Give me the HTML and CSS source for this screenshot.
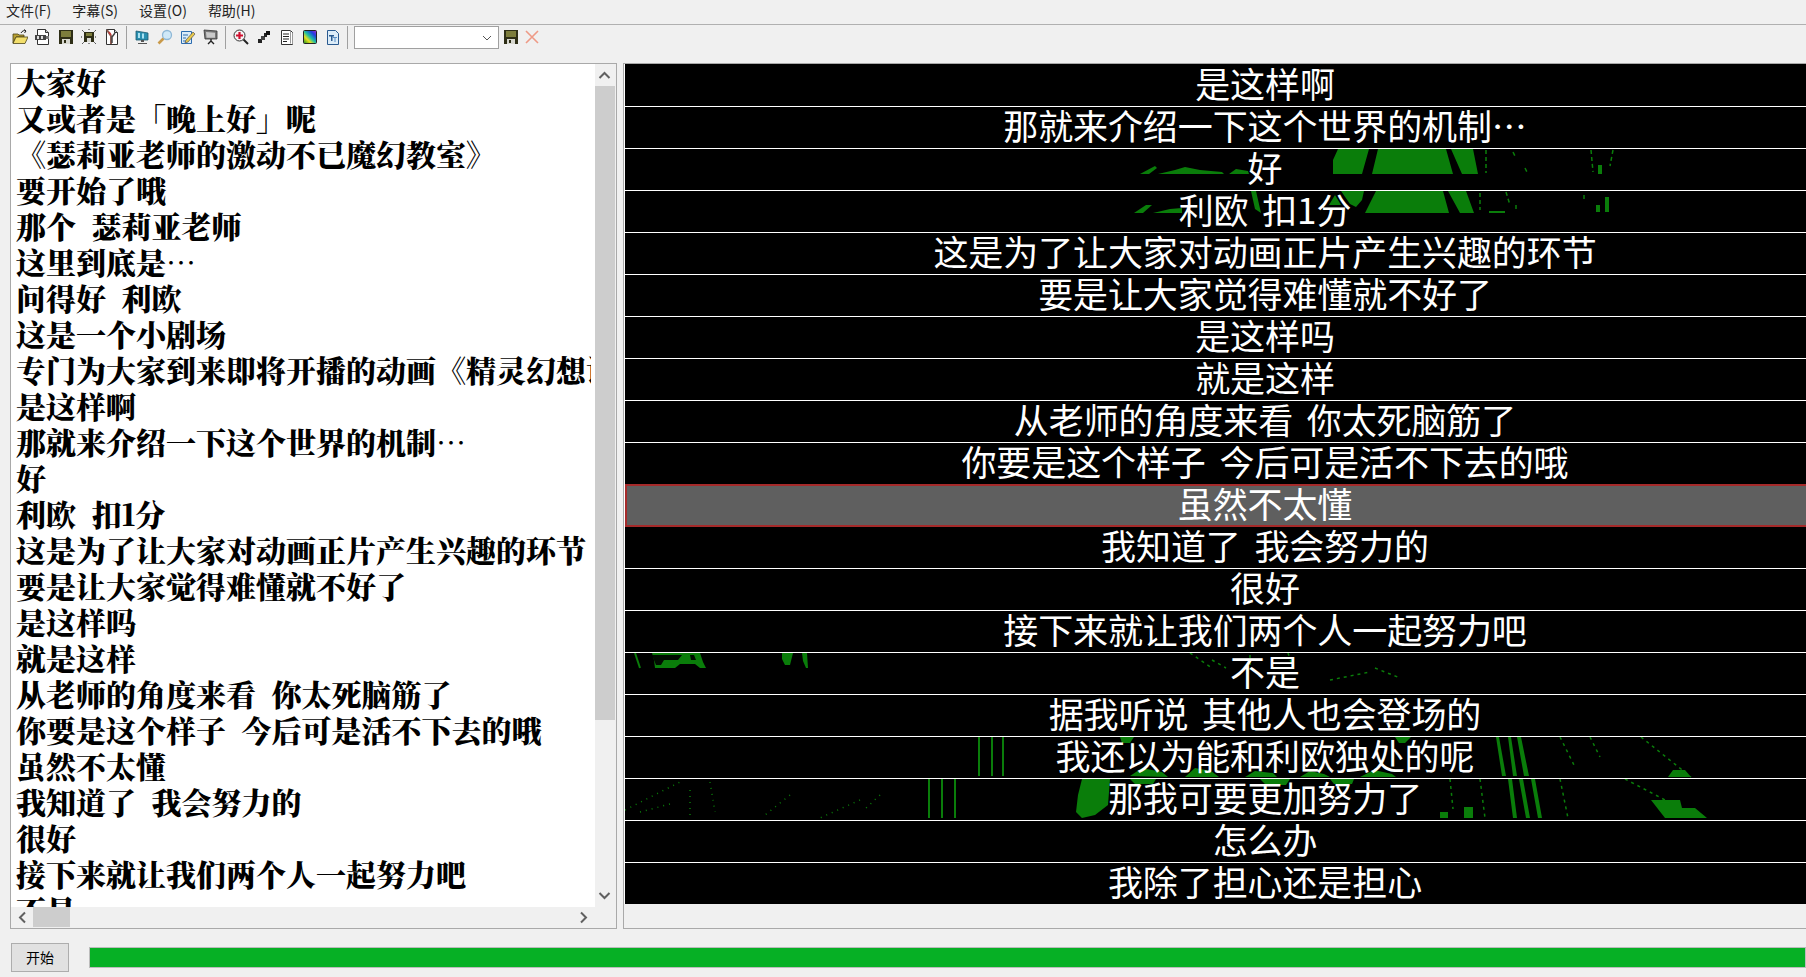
FILE: index.html
```html
<!DOCTYPE html>
<html lang="zh-CN">
<head>
	<meta charset="utf-8">
	<title>字幕</title>
	<link rel="stylesheet" href="styles.css">
</head>
<body>
	<svg class="defs" width="0" height="0">
		<symbol id="floppy" viewBox="0 0 16 16">
			<rect x="1" y="1" width="14" height="14" fill="#2e2e16"/>
			<rect x="3" y="2" width="10" height="6" fill="#7d7d3c"/>
			<rect x="4" y="10" width="8" height="5" fill="#d8d8d0"/>
			<rect x="6" y="11" width="2" height="3" fill="#2e2e16"/>
		</symbol>
		<symbol id="page" viewBox="0 0 16 16">
			<path d="M2.500.5h8l3 3v12h-11z" fill="#fff" stroke="#333"/>
			<path d="M10.500.5v3h3" fill="#ccc" stroke="#333"/>
		</symbol>
	</svg>

	<div class="menubar">
		<span>文件(F)</span>
		<span>字幕(S)</span>
		<span>设置(O)</span>
		<span>帮助(H)</span>
	</div>

	<div class="toolbar">
		<span class="tool"><svg viewBox="0 0 16 16"><path d="M1 5h5l1 1h5v2H4L1 14z" fill="#b8a032" stroke="#4a4218" stroke-width=".8"/><path d="M4 8h12l-3 6.500H1z" fill="#f3df6c" stroke="#4a4218" stroke-width=".8"/><path d="M9 4c1-2 3-3 5-2M14 2l-2-1.500M14 2l-1.500 2" fill="none" stroke="#222" stroke-width="1"/></svg></span>
		<span class="tool"><svg viewBox="0 0 16 16"><use href="#page"/><rect x="0" y="6" width="11" height="5" fill="#444"/><path d="M2 7h2v3H2zM6 7h2v3H6z" fill="#ddd"/><rect x="11" y="7" width="3" height="3" fill="#777"/></svg></span>
		<span class="tool"><svg viewBox="0 0 16 16"><use href="#floppy"/></svg></span>
		<span class="tool"><svg viewBox="0 0 16 16"><rect x="3" y="3" width="10" height="10" fill="#2e2e16"/><rect x="5" y="4" width="6" height="3" fill="#7d7d3c"/><rect x="6" y="9" width="4" height="4" fill="#d8d8d0"/><path d="M1 1l2 2M15 1l-2 2M1 15l2-2M15 15l-2-2M8 0v2M8 14v2M0 8h2M14 8h2" stroke="#222" stroke-width="1" stroke-dasharray="1 1"/></svg></span>
		<span class="tool"><svg viewBox="0 0 16 16"><use href="#page"/><path d="M3 1l4 6v8" fill="none" stroke="#8c5a50" stroke-width="2"/><path d="M11 4l-3 4v6" fill="none" stroke="#444" stroke-width="1.500"/><path d="M5 3l2 3" stroke="#c23a3a" stroke-width="1.500"/></svg></span>
		<i class="sep"></i>
		<span class="tool"><svg viewBox="0 0 16 16"><path d="M2 2l12 2v7L2 11z" fill="#2a8fb0" stroke="#1c5a70" stroke-width=".8"/><path d="M4 4h2v5H4zM8 4.500h2v5H8z" fill="#a9e2f2"/><path d="M7 11h3v2H7zM4 14h9v1H4z" fill="#555"/></svg></span>
		<span class="tool"><svg viewBox="0 0 16 16"><circle cx="10" cy="6" r="4.500" fill="#cfe8f7" stroke="#8fb8d6" stroke-width="1.300"/><path d="M6.500 9.500L1.500 14.500" stroke="#c99a4a" stroke-width="2.600"/></svg></span>
		<span class="tool"><svg viewBox="0 0 16 16"><path d="M1.500 2.500h10v12h-10z" fill="#dcecf8" stroke="#2c6cb0"/><path d="M3 6h5M3 9h3M3 12h4" stroke="#2c6cb0"/><path d="M6 11l7-8 2 2-7 8-3 1z" fill="#e8c84a" stroke="#555" stroke-width=".7"/></svg></span>
		<span class="tool"><svg viewBox="0 0 16 16"><path d="M1 1l13 1v8H2z" fill="#777" stroke="#333" stroke-width=".8"/><path d="M3 3l9 .7v5H3.500z" fill="#c9c9c9"/><path d="M8 10v3M8 12l-3 3M8 12l3 3" stroke="#222" stroke-width="1.400"/></svg></span>
		<i class="sep"></i>
		<span class="tool"><svg viewBox="0 0 16 16"><circle cx="6.500" cy="6.500" r="5.500" fill="#f4f4f4" stroke="#333" stroke-width="1"/><path d="M6.500 3v7M3 6.500h7" stroke="#d01030" stroke-width="2.200"/><path d="M10.500 10.500l4.500 4.500" stroke="#222" stroke-width="2"/></svg></span>
		<span class="tool"><svg viewBox="0 0 16 16"><path d="M2 10h4v4H2z" fill="#222"/><path d="M5 7h4v4H5z" fill="#444"/><path d="M8 4h3v4H8z" fill="#222"/><path d="M10 2h4v4h-4z" fill="#111"/></svg></span>
		<span class="tool"><svg viewBox="0 0 16 16"><path d="M2.500 1.500h9l2 2v12h-11z" fill="#fff" stroke="#333"/><path d="M11.500 1.500v13M13.500 4v11" stroke="#999"/><path d="M4 5h6M4 7.500h6M4 10h6M4 12.500h4" stroke="#222"/></svg></span>
		<span class="tool"><svg viewBox="0 0 16 16"><defs><linearGradient id="rainbow" x1="0" y1="1" x2="1" y2="0"><stop offset="0" stop-color="#0a8a20"/><stop offset=".3" stop-color="#e8e020"/><stop offset=".5" stop-color="#20c0a0"/><stop offset=".75" stop-color="#2040e0"/><stop offset="1" stop-color="#b020d0"/></linearGradient></defs><rect x="1.500" y="1.500" width="13" height="13" rx="1" fill="url(#rainbow)" stroke="#222"/></svg></span>
		<span class="tool"><svg viewBox="0 0 16 16"><path d="M2.500 1.500h8l3 3v11h-11z" fill="#dcecf8" stroke="#2a5a90"/><path d="M4 6h5v1.500H7.500V12H6V7.500H4z" fill="#2a5a90"/><path d="M8 8h4v1h-1.500v4h-1V9H8z" fill="#5a90c8"/></svg></span>
		<i class="sep"></i>
		<div class="combo">
			<svg viewBox="0 0 10 6"><path d="M1 1l4 4 4-4" fill="none" stroke="#555" stroke-width="1"/></svg>
		</div>
		<span class="tool"><svg viewBox="0 0 16 16"><use href="#floppy"/></svg></span>
		<span class="tool tool-close"><svg viewBox="0 0 16 16"><path d="M2 2l12 12M14 2L2 14" stroke="#ee9a86" stroke-width="1.600"/></svg></span>
	</div>

	<div class="main">
		<div class="text-panel">
			<div class="text-body">
				<div class="text-lines">
					<p>大家好</p>
					<p>又或者是「晚上好」呢</p>
					<p>《瑟莉亚老师的激动不已魔幻教室》</p>
					<p>要开始了哦</p>
					<p>那个 瑟莉亚老师</p>
					<p>这里到底是…</p>
					<p>问得好 利欧</p>
					<p>这是一个小剧场</p>
					<p>专门为大家到来即将开播的动画《精灵幻想记》</p>
					<p>是这样啊</p>
					<p>那就来介绍一下这个世界的机制…</p>
					<p>好</p>
					<p>利欧 扣1分</p>
					<p>这是为了让大家对动画正片产生兴趣的环节</p>
					<p>要是让大家觉得难懂就不好了</p>
					<p>是这样吗</p>
					<p>就是这样</p>
					<p>从老师的角度来看 你太死脑筋了</p>
					<p>你要是这个样子 今后可是活不下去的哦</p>
					<p>虽然不太懂</p>
					<p>我知道了 我会努力的</p>
					<p>很好</p>
					<p>接下来就让我们两个人一起努力吧</p>
					<p>不是</p>
				</div>
				<div class="vbar">
					<svg viewBox="0 0 12 8"><path d="M1 7l5-5 5 5" fill="none" stroke="#606060" stroke-width="2"/></svg>
					<div class="vbar-track"><div class="vbar-thumb"></div></div>
					<svg viewBox="0 0 12 8"><path d="M1 1l5 5 5-5" fill="none" stroke="#606060" stroke-width="2"/></svg>
				</div>
			</div>
			<div class="hbar">
				<svg viewBox="0 0 8 12"><path d="M7 1L2 6l5 5" fill="none" stroke="#606060" stroke-width="2"/></svg>
				<div class="hbar-track"><div class="hbar-thumb"></div></div>
				<svg viewBox="0 0 8 12"><path d="M1 1l5 5-5 5" fill="none" stroke="#606060" stroke-width="2"/></svg>
			</div>
		</div>

		<div class="sub-panel">
			<div class="sub-list">
				<svg class="sub-frames" viewBox="625 64 1280 840">
					<g fill="#0a7d0a">
						<path d="M1140 174l15-8 2 2-8 6zM1158 174l17-4 10-3 15 3 22 2 2 2zM1229 174l7-5 12 2 1 3z"/>
						<path d="M1338 149h31l-7 25h-29v-14zM1378 149h68l7 25h-81zM1451 149h22l5 25h-16z"/>
						<path d="M1134 213l12-8h6l-9 8zM1153 213l17-4 12-1v5zM1251 191h5l5 22-6-4zM1329 205l6-10 6 10zM1341 191h23l-2 9-6 7-6-3zM1376 191h67l6 22h-84zM1448 191h18l8 22h-14z"/>
						<path d="M1598 165h4v9h-4zM1596 205h4v7h-4zM1605 197h4v15h-4zM1489 211h16v2h-16z"/>
						<path d="M652 653h48l3 9 3 6h-6l-5-4h-15l-5 4h-20l-1-8zM782 653h11l-2 8-1 4h-5l-3-6zM802 653h5l1 15h-2l-3-7z"/>
						<path d="M1082 779h28l-2 26-13 10-13 3-6-6 2-17zM1464 807h9v11h-9zM1651 800h29l2 8h13l12 10h-42zM1668 777l5-7h12l6 7z"/>
						<path d="M1496 737h3l7 39h-4zM1508 737h3l6 39h-4zM1517 737h4l8 39h-5zM1508 779h4l5 39h-4zM1519 779h4l7 39h-4zM1531 779h4l7 39h-4z"/>
						<path d="M1130 776l12-8 20 4 6 5zM1185 777l10-9 16 3 8 6zM1245 777l10-6 18 2 4 4zM1300 777l10-6 14 3 6 3zM1360 777l14-7 18 4 4 3zM1120 737h14l-4 6h-8zM1395 737h16l-6 6h-6z"/>
						<path d="M1130 779h26l-3 5h-18zM1260 779h30l-4 6h-20zM1330 779h24l-2 5h-18zM1440 812h8v6h-8z"/>
					</g>
					<path d="M652 655h30l-4 5h-14l-3 5h-5zM690 655h4l2 5h-5z" fill="#000" opacity=".9"/>
					<g fill="none" stroke="#0a7d0a" stroke-width="1.500">
						<path d="M635 653l5 15" stroke-width="2"/>
						<path d="M979 737v39M992 737v39M1003 737v39" stroke-width="2"/>
						<path d="M929 779v39M942 779v39M955 779v39" stroke-width="2"/>
						<path d="M1486 150v23M1513 152l3 6M1525 168l2 4M1591 150l2 22M1613 150l-3 16M1480 193v17M1506 192l4 13M1516 205v5M1584 195v6" stroke-dasharray="4 3"/>
						<path d="M1190 653l22 15M1250 655v15M1212 660l14 8M1288 653l6 18M1330 680l40-8M1375 668l25 10M1641 737l50 40M1560 737l14 28M1590 737l10 20M1560 779l8 39M1625 779l40 21M1480 779l5 39M1450 779l3 30" stroke-dasharray="3 4"/>
						<path d="M625 810l55-28M640 812l30-8M690 790v26M710 782l5 30M790 795l-25 20M860 800l-40 18M880 795l-15 14" stroke-dasharray="1 5"/>
					</g>
				</svg>
				<div class="sub-row">是这样啊</div>
				<div class="sub-row">那就来介绍一下这个世界的机制…</div>
				<div class="sub-row">好</div>
				<div class="sub-row">利欧 扣1分</div>
				<div class="sub-row">这是为了让大家对动画正片产生兴趣的环节</div>
				<div class="sub-row">要是让大家觉得难懂就不好了</div>
				<div class="sub-row">是这样吗</div>
				<div class="sub-row">就是这样</div>
				<div class="sub-row">从老师的角度来看 你太死脑筋了</div>
				<div class="sub-row">你要是这个样子 今后可是活不下去的哦</div>
				<div class="sub-row selected">虽然不太懂</div>
				<div class="sub-row">我知道了 我会努力的</div>
				<div class="sub-row">很好</div>
				<div class="sub-row">接下来就让我们两个人一起努力吧</div>
				<div class="sub-row">不是</div>
				<div class="sub-row">据我听说 其他人也会登场的</div>
				<div class="sub-row">我还以为能和利欧独处的呢</div>
				<div class="sub-row">那我可要更加努力了</div>
				<div class="sub-row">怎么办</div>
				<div class="sub-row">我除了担心还是担心</div>
			</div>
		</div>
	</div>

	<div class="footer">
		<button class="start">开始</button>
		<div class="progress"></div>
	</div>
</body>
</html>
```

FILE: styles.css
```css
html, body {
	height: 100%;
	margin: 0;
	overflow: hidden;
}
body {
	background: #f0f0f0;
	color: #000;
	display: flex;
	flex-direction: column;
	font-family: "Noto Sans CJK SC", sans-serif;
	font-size: 14px;
}
.defs {
	position: absolute;
}
.menubar {
	border-bottom: 1px solid #b0b0b0;
	color: #222;
	display: flex;
	gap: 21px;
	height: 24px;
	line-height: 21px;
	padding-left: 6px;
}
.toolbar {
	align-items: center;
	display: flex;
	height: 25px;
	padding: 0 0 0 8px;
}
.tool {
	display: flex;
	justify-content: center;
	padding-bottom: 2px;
	width: 23px;
}
.tool svg {
	height: 16px;
	width: 16px;
}
.tool-close {
	margin-left: -2px;
}
.sep {
	background: #a0a0a0;
	height: 23px;
	margin: 0 3px;
	width: 1px;
}
.combo {
	align-items: center;
	background: #fff;
	border: 1px solid #a0a0a0;
	box-sizing: border-box;
	display: flex;
	height: 23px;
	justify-content: flex-end;
	margin-left: 3px;
	padding-right: 6px;
	width: 145px;
}
.combo svg {
	height: 6px;
	width: 10px;
}
.main {
	display: flex;
	gap: 6px;
	height: 866px;
	margin-top: 13px;
	padding-left: 10px;
}
.text-panel {
	border: 1px solid #a9a9a9;
	box-sizing: border-box;
	display: flex;
	flex-direction: column;
	flex: none;
	width: 607px;
}
.text-body {
	display: flex;
	flex: 1;
	min-height: 0;
}
.text-lines {
	background: #fff;
	border-right: 4px solid #fff;
	box-sizing: border-box;
	flex: 1;
	font-family: "Noto Serif CJK SC", "Noto Sans CJK SC", serif;
	font-size: 30px;
	font-weight: 900;
	min-width: 0;
	overflow: hidden;
	padding: 0 0 0 5px;
	word-spacing: 8px;
}
.text-lines p {
	height: 36px;
	line-height: 34px;
	margin: 0;
	white-space: nowrap;
}
.vbar {
	display: flex;
	flex-direction: column;
	flex: none;
	margin-right: 1px;
	width: 20px;
}
.vbar svg {
	flex: none;
	height: 8px;
	margin: 7px 3px;
	width: 13px;
}
.vbar-track {
	flex: 1;
}
.vbar-thumb {
	background: #cdcdcd;
	height: 634px;
}
.hbar {
	align-items: center;
	display: flex;
	flex: none;
	height: 20px;
	padding: 0 21px 1px 0;
}
.hbar svg {
	flex: none;
	height: 13px;
	margin: 0 7px;
	width: 8px;
}
.hbar-track {
	flex: 1;
	height: 100%;
}
.hbar-thumb {
	background: #cdcdcd;
	height: 100%;
	width: 37px;
}
.sub-panel {
	border: 1px solid #a9a9a9;
	box-sizing: border-box;
	flex: none;
	width: 1290px;
}
.sub-list {
	background: #000;
	border-left: 1px solid #fff;
	height: 840px;
	position: relative;
	width: 1280px;
}
.sub-frames {
	height: 840px;
	left: 0;
	position: absolute;
	top: 0;
	width: 1280px;
}
.sub-row {
	border-top: 1px solid #fff;
	box-sizing: border-box;
	color: #fff;
	font-size: 35px;
	height: 42px;
	letter-spacing: -0.1px;
	line-height: 36px;
	position: relative;
	text-align: center;
	white-space: nowrap;
	word-spacing: 6px;
}
.sub-row:first-of-type {
	border-top-color: #000;
}
.sub-row.selected {
	background: #5f5f5f;
	border: 2px solid #a52a2a;
	height: 43px;
	line-height: 34px;
	margin-bottom: -1px;
	z-index: 1;
}
.footer {
	align-items: center;
	box-sizing: border-box;
	display: flex;
	height: 48px;
	padding: 8px 0 0 11px;
}
.start {
	background: #e1e1e1;
	border: 1px solid #adadad;
	font-family: "Noto Sans CJK SC", sans-serif;
	font-size: 14px;
	height: 29px;
	padding: 0;
	width: 58px;
}
.progress {
	background: #06b025;
	border: 1px solid #bcbcbc;
	box-sizing: border-box;
	flex: 1;
	height: 21px;
	margin-left: 20px;
}
```
